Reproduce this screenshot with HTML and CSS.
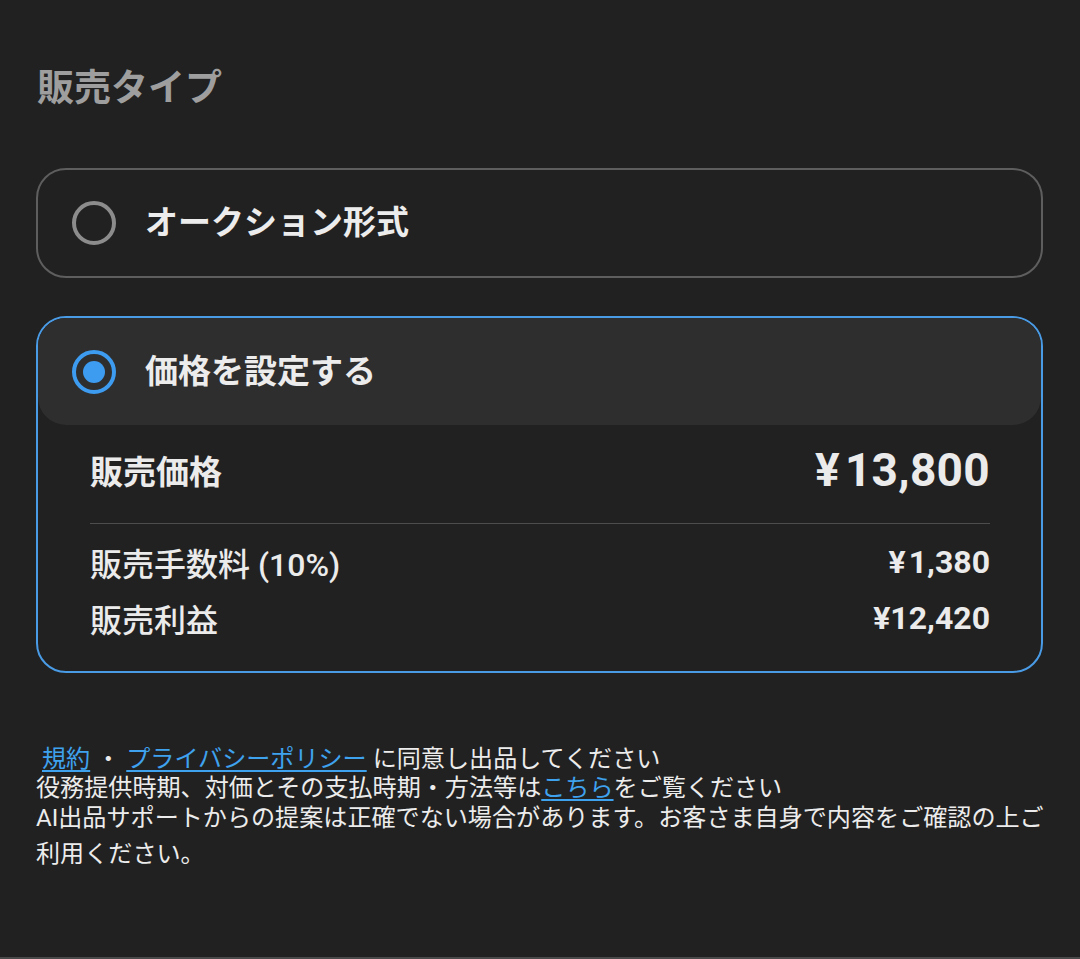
FILE: index.html
```html
<!DOCTYPE html>
<html lang="ja">
<head>
<meta charset="utf-8">
<title>販売タイプ</title>
<link rel="stylesheet" href="styles.css">
</head>
<body>
<div class="page">
  <h2 class="section-title">販売タイプ</h2>

  <div class="option">
    <div class="option-head">
      <span class="radio"></span>
      <span class="option-label">オークション形式</span>
    </div>
  </div>

  <div class="option selected">
    <div class="option-head">
      <span class="radio checked"></span>
      <span class="option-label">価格を設定する</span>
    </div>
    <div class="option-body">
      <div class="row row-main">
        <span class="row-label">販売価格</span>
        <span class="price-big"><span class="yen">¥</span>13,800</span>
      </div>
      <div class="divider"></div>
      <div class="row row-sub">
        <span class="row-label">販売手数料 (10%)</span>
        <span class="price-small"><span class="yen">¥</span>1,380</span>
      </div>
      <div class="row row-sub">
        <span class="row-label">販売利益</span>
        <span class="price-small">¥12,420</span>
      </div>
    </div>
  </div>

  <div class="notes">
    <p class="note-line">&nbsp;<a href="#">規約</a> ・ <a href="#">プライバシーポリシー</a> に同意し出品してください</p>
    <p class="note-line">役務提供時期、対価とその支払時期・方法等は<a href="#">こちら</a>をご覧ください</p>
    <p class="note-line note-wrap">AI出品サポートからの提案は正確でない場合があります。お客さま自身で内容をご確認の上ご利用ください。</p>
  </div>
</div>
</body>
</html>
```

FILE: styles.css
```css
* { box-sizing: border-box; }

html, body {
  margin: 0;
  padding: 0;
  background: #212121;
}

body {
  font-family: Roboto, "Noto Sans CJK JP", sans-serif;
  color: #ebebeb;
}

.page {
  min-height: 959px;
  padding: 67px 37px 0 36px;
  border-bottom: 2px solid #4a4a4a;
}

.section-title {
  margin: 0 0 57px 0;
  font-size: 37px;
  line-height: 44px;
  font-weight: 700;
  color: #9e9e9e;
  padding-left: 1px;
}

.option {
  border: 2px solid #5e5e5e;
  border-radius: 30px;
  margin-bottom: 38px;
  overflow: hidden;
}

.option.selected {
  border-color: #4a9be6;
}

.option-head {
  height: 106px;
  display: flex;
  align-items: center;
  padding-left: 34px;
  gap: 29px;
}

.option.selected .option-head {
  height: 107px;
  background: #2e2e2e;
  border-radius: 0 0 28px 28px;
}

.radio {
  width: 44px;
  height: 44px;
  border-radius: 50%;
  border: 4px solid #8c8c8c;
  flex: none;
  display: flex;
  align-items: center;
  justify-content: center;
}

.radio.checked {
  border-color: #3d9bf0;
}

.radio.checked::after {
  content: "";
  width: 22px;
  height: 22px;
  border-radius: 50%;
  background: #3d9bf0;
}

.option-label {
  font-size: 33px;
  font-weight: 700;
  color: #ececec;
  line-height: 44px;
}

.option-body {
  padding: 17px 51px 31px 52px;
}

.row {
  display: flex;
  justify-content: space-between;
  align-items: center;
}

.row-main {
  height: 56px;
}

.row-main .row-label {
  font-size: 33px;
  font-weight: 700;
}

.price-big {
  font-size: 46px;
  font-weight: 700;
  letter-spacing: 0.3px;
}

.price-big .yen {
  margin-right: 5px;
}

.divider {
  height: 1px;
  background: #4d4d4d;
  margin: 25px 0 16px;
}

.row-sub {
  height: 44px;
}

.row-sub + .row-sub {
  margin-top: 12px;
}

.row-sub .row-label {
  font-size: 32px;
  font-weight: 500;
}

.price-small {
  font-size: 32px;
  font-weight: 700;
}

.price-small .yen {
  margin-right: 3px;
}

.notes {
  margin-top: 72px;
  margin-right: -4px;
}

.note-line {
  margin: 0;
  font-size: 24.1px;
  line-height: 29px;
  color: #ececec;
}

.note-wrap {
  line-height: 36px;
  margin-top: -3.5px;
}

.notes a {
  color: #3fa2ee;
  text-decoration: underline;
  text-underline-offset: 3px;
}
```
